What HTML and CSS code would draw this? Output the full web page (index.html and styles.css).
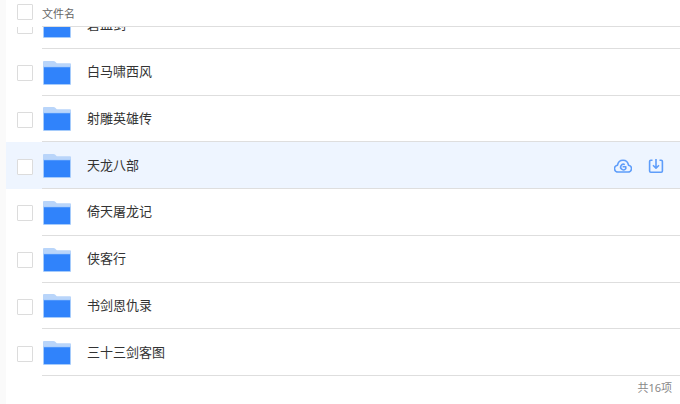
FILE: index.html
```html
<!DOCTYPE html>
<html lang="zh-CN">

<head>
    <meta charset="UTF-8">
    <meta name="viewport" content="width=device-width, initial-scale=1.0">
    <title>文件列表</title>
    <link rel="stylesheet" href="styles.css">
</head>

<body>
    <svg class="defs" aria-hidden="true">
        <symbol id="folder" viewBox="0 0 28 24">
            <path d="M0 8V1Q0 0 1 0H10.5Q11.5 0 12 .6L13.8 2.2H27Q28 2.2 28 3.2V8Z" fill="#b9d5fa" />
            <path d="M0 5.5H28V23Q28 24 27 24H1Q0 24 0 23Z" fill="#a5cbfb" />
            <path d="M1 6.3H27V22.5Q27 23 26.5 23H1.5Q1 23 1 22.5Z" fill="#3083fb" />
        </symbol>
    </svg>
    <main class="panel">
        <div class="head">
            <input type="checkbox" id="all">
            <label class="cell" for="all">文件名</label>
        </div>
        <div class="scroll">
            <ul class="list">
                <li class="row">
                    <input type="checkbox" id="f1">
                    <div class="cell"><svg class="folder"><use href="#folder" /></svg><label for="f1">碧血剑</label></div>
                </li>
                <li class="row">
                    <input type="checkbox" id="f2">
                    <div class="cell"><svg class="folder"><use href="#folder" /></svg><label for="f2">白马啸西风</label></div>
                </li>
                <li class="row">
                    <input type="checkbox" id="f3">
                    <div class="cell"><svg class="folder"><use href="#folder" /></svg><label for="f3">射雕英雄传</label></div>
                </li>
                <li class="row active">
                    <input type="checkbox" id="f4">
                    <div class="cell">
                        <svg class="folder"><use href="#folder" /></svg><label for="f4">天龙八部</label>
                        <div class="actions">
                            <button type="button" aria-label="转存到云盘">
                                <svg viewBox="0 0 18 18">
                                    <path d="M4.4 15A3.4 3.4 0 0 1 3.5 8.2C4 5.2 6.2 3.3 9 3.3S14 5.2 14.5 8.2A3.4 3.4 0 0 1 13.6 15Z" />
                                    <path d="M10.8 7.6A2.8 2.8 0 1 0 11.8 11.6V9.8H8.6" />
                                </svg>
                            </button>
                            <button type="button" aria-label="下载">
                                <svg viewBox="0 0 18 18">
                                    <path d="M5.5 3.2H3.8Q2.6 3.2 2.6 4.4V14Q2.6 15.2 3.8 15.2H14.2Q15.4 15.2 15.4 14V4.4Q15.4 3.2 14.2 3.2H12.5" />
                                    <path d="M9 2V10.8M6 8.2L9 11.2L12 8.2" />
                                </svg>
                            </button>
                        </div>
                    </div>
                </li>
                <li class="row">
                    <input type="checkbox" id="f5">
                    <div class="cell"><svg class="folder"><use href="#folder" /></svg><label for="f5">倚天屠龙记</label></div>
                </li>
                <li class="row">
                    <input type="checkbox" id="f6">
                    <div class="cell"><svg class="folder"><use href="#folder" /></svg><label for="f6">侠客行</label></div>
                </li>
                <li class="row">
                    <input type="checkbox" id="f7">
                    <div class="cell"><svg class="folder"><use href="#folder" /></svg><label for="f7">书剑恩仇录</label></div>
                </li>
                <li class="row">
                    <input type="checkbox" id="f8">
                    <div class="cell"><svg class="folder"><use href="#folder" /></svg><label for="f8">三十三剑客图</label></div>
                </li>
            </ul>
        </div>
        <div class="foot">共16项</div>
    </main>
</body>

</html>
```
FILE: styles.css
```css
* {
    box-sizing: border-box;
}

body {
    margin: 0;
    padding-left: 6px;
    background-color: #fafafa;
    color: #333;
    font-family: "Noto Sans", "Noto Sans CJK SC", sans-serif;
    font-size: 13px;
}

.defs {
    display: none;
}

.panel {
    display: flex;
    flex-direction: column;
    height: 100vh;
    background-color: #fff;
}

.head,
.row {
    display: flex;
    align-items: center;
    gap: 9px;
    padding-left: 11px;
}

.cell {
    display: flex;
    flex: 1;
    align-items: center;
    align-self: stretch;
    border-bottom: 1px solid #dedede;
}

.row .cell {
    padding-top: 2px;
}

.head {
    flex: none;
    height: 27px;
    color: #666;
    font-size: 11px;
}

input[type="checkbox"] {
    appearance: none;
    flex: none;
    width: 16px;
    height: 16px;
    margin: 0;
    border: 1px solid #dcdcdc;
    border-radius: 1px;
    background-color: #fff;
}

input[type="checkbox"]:checked {
    background-color: #3083fb;
}

.head input {
    margin-bottom: 3px;
}

/* column-reverse keeps the list scrolled to its end */
.scroll {
    display: flex;
    flex: 1;
    flex-direction: column-reverse;
    min-height: 0;
    overflow-y: auto;
    scrollbar-width: none;
}

.list {
    display: grid;
    flex: none;
    grid-template-rows: repeat(8, 1fr);
    height: 374px;
    margin: 0;
    padding: 0;
    list-style: none;
}

.row input {
    margin-top: 2px;
}

.row label {
    padding-bottom: 4px;
}

.row.active {
    background-color: #eef5ff;
}

.folder {
    width: 28px;
    height: 24px;
    margin-left: 1px;
    margin-right: 16px;
}

.actions {
    display: flex;
    gap: 15px;
    margin-left: auto;
    padding-right: 15px;
}

.actions button {
    width: 18px;
    height: 18px;
    padding: 0;
    border: none;
    background: none;
}

.actions svg {
    display: block;
    fill: none;
    stroke: #5e9dfa;
    stroke-width: 1.6;
    stroke-linejoin: round;
}

.foot {
    flex: none;
    height: 28px;
    padding-right: 8px;
    color: #888;
    font-size: 11px;
    line-height: 24px;
    text-align: right;
}
```
